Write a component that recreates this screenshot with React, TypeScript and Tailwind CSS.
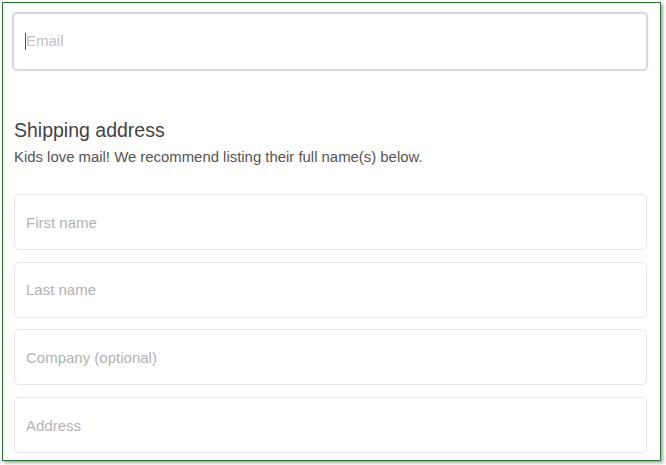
import React from 'react';

const fields = ['First name', 'Last name', 'Company (optional)', 'Address'];

export default function App() {
    return (
        <div className="w-[666px] h-[465px] bg-white font-['Liberation_Sans',Arial,sans-serif]">
            <div className="ml-[2px] mt-[2px] w-[659px] h-[459px] border border-[#2a6f2e] bg-white shadow-[2px_2px_3px_rgba(0,0,0,0.35)] pl-[9px] pr-[12px] pt-[9px] overflow-hidden">
                {/* Email (focused) */}
                <div className="h-[59px] rounded-[5px] border-2 border-[#d9d9d9] shadow-[0_0_2px_rgba(0,0,0,0.12)] flex items-center pl-[11px]">
                    <span className="w-px h-[17px] bg-[#555]" />
                    <span className="text-[15px] text-[#c2c2c2]">Email</span>
                </div>

                <div className="pl-[2px] pr-[1px]">
                    <h2 className="mt-[47px] text-[19.5px] leading-[24px] text-[#444]">Shipping address</h2>
                    <p className="mt-[5px] text-[14.9px] leading-[20px] text-[#555]">
                        Kids love mail! We recommend listing their full name(s) below.
                    </p>

                    <div className="mt-[27px] flex flex-col gap-[11.7px]">
                        {fields.map((f) => (
                            <input
                                key={f}
                                placeholder={f}
                                className="h-[56px] w-full rounded-[5px] border border-[#e6e6e6] px-[11px] text-[15px] text-[#333] placeholder:text-[#b3b3b3] outline-none"
                            />
                        ))}
                    </div>
                </div>
            </div>
        </div>
    );
}
